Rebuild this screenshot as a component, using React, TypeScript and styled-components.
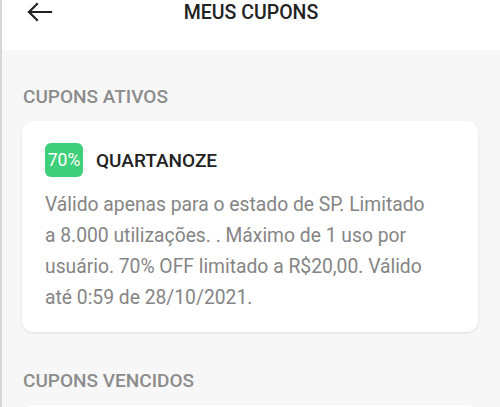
import React from "react";
import styled, { createGlobalStyle } from "styled-components";

const GlobalStyle = createGlobalStyle`
  html, body {
    margin: 0;
    padding: 0;
    background: #f7f7f7;
    font-family: Roboto, "Noto Sans", Arial, sans-serif;
  }
`;

const Screen = styled.div`
  display: flex;
  flex-direction: column;
  width: 500px;
  height: 407px;
  overflow: hidden;
  background: #f7f7f7;
  border-left: 2px solid #d6d6d6;
  box-sizing: border-box;
`;

const Header = styled.header`
  position: relative;
  display: flex;
  align-items: flex-start;
  justify-content: center;
  height: 50px;
  background: #ffffff;
  flex-shrink: 0;
`;

const BackButton = styled.button`
  position: absolute;
  left: 23px;
  top: 1px;
  display: flex;
  padding: 0;
  border: none;
  background: none;
  color: #222;
`;

const Title = styled.h1`
  margin: 0;
  margin-top: 1px;
  font-size: 19.5px;
  font-weight: 500;
  line-height: 23px;
  color: #222;
`;

const Content = styled.main`
  display: flex;
  flex-direction: column;
  padding: 36px 22px 0 20px;
`;

const SectionTitle = styled.h2`
  margin: 0 0 13px 1px;
  font-size: 19px;
  font-weight: 500;
  line-height: 22px;
  color: #8c8c8c;
`;

const Card = styled.div<{ minHeight?: number }>`
  display: flex;
  flex-direction: column;
  gap: 12px;
  min-height: ${({ minHeight }) => (minHeight ? `${minHeight}px` : "0")};
  padding: 22px 43px 19px 23px;
  background: #ffffff;
  border-radius: 11px;
  box-shadow: 0 1px 3px rgba(0, 0, 0, 0.1);
  margin-bottom: 38px;
  flex-shrink: 0;
`;

const CardHeader = styled.div`
  display: flex;
  align-items: center;
  gap: 13px;
`;

const Badge = styled.span`
  display: flex;
  align-items: center;
  justify-content: center;
  width: 38px;
  height: 34px;
  border-radius: 6px;
  background: #3dcf79;
  color: #fff;
  font-size: 17.5px;
  font-weight: 400;
`;

const CouponCode = styled.span`
  font-size: 19px;
  font-weight: 500;
  color: #222;
`;

const Description = styled.p`
  margin: 0;
  font-size: 19.3px;
  line-height: 31px;
  color: #858585;
`;

const ArrowIcon = () => (
  <svg width="28" height="22" viewBox="0 0 28 22" fill="none">
    <path
      d="M26 11H4M12 3L4 11L12 19"
      stroke="currentColor"
      strokeWidth="2.2"
      strokeLinecap="square"
    />
  </svg>
);

const App = () => {
  return (
    <>
      <GlobalStyle />
      <Screen>
        <Header>
          <BackButton aria-label="Voltar">
            <ArrowIcon />
          </BackButton>
          <Title>MEUS CUPONS</Title>
        </Header>
        <Content>
          <SectionTitle>CUPONS ATIVOS</SectionTitle>
          <Card>
            <CardHeader>
              <Badge>70%</Badge>
              <CouponCode>QUARTANOZE</CouponCode>
            </CardHeader>
            <Description>
              Válido apenas para o estado de SP. Limitado a 8.000 utilizações. .
              Máximo de 1 uso por usuário. 70% OFF limitado a R$20,00. Válido
              até 0:59 de 28/10/2021.
            </Description>
          </Card>
          <SectionTitle>CUPONS VENCIDOS</SectionTitle>
          <Card minHeight={80} />
        </Content>
      </Screen>
    </>
  );
};

export default App;
